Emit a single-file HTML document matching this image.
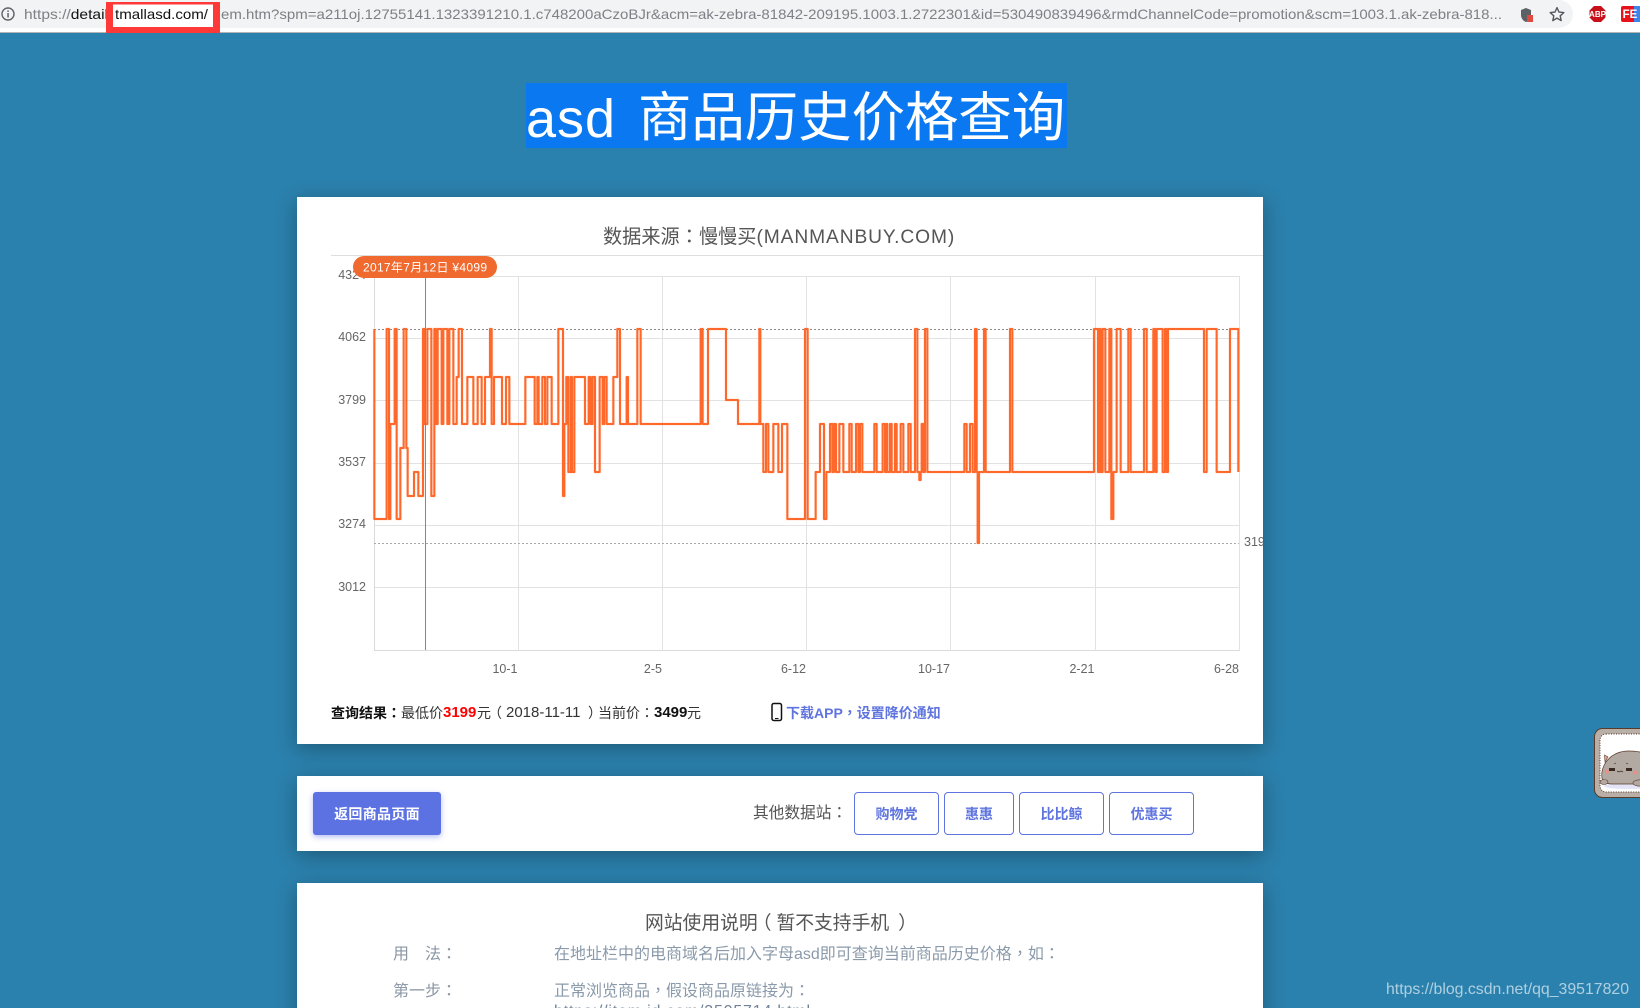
<!DOCTYPE html>
<html>
<head>
<meta charset="utf-8">
<title>asd 商品历史价格查询</title>
<style>
html,body{margin:0;padding:0;width:1640px;height:1008px;overflow:hidden;background:#2b81ad;font-family:"Liberation Sans","Noto Sans CJK SC",sans-serif;}
#root{position:relative;width:1640px;height:1008px;overflow:hidden;}
.t{position:absolute;white-space:nowrap;}
.c{font-family:"Noto Sans CJK TC",sans-serif;}
.card{position:absolute;left:297px;width:966px;background:#fff;box-shadow:0 5px 20px rgba(0,0,0,.3);overflow:hidden;}
.btn{position:absolute;top:792px;height:41px;border:1px solid #5f74df;border-radius:4px;color:#5f74df;font-weight:bold;font-size:14px;line-height:43px;text-align:center;background:#fff;}
svg{position:absolute;left:0;top:0;}
</style>
</head>
<body>
<div id="root">

<!-- browser bar -->
<div style="position:absolute;left:0;top:0;width:1640px;height:32px;background:#fff;border-bottom:1px solid #b5b5b5;"></div>
<div style="position:absolute;left:0;top:0;width:1573px;height:28px;background:#f1f3f4;border-radius:0 14px 14px 0;"></div>

<!-- heading -->
<div style="position:absolute;left:526px;top:83px;width:541px;height:65px;background:#0a78f0;overflow:hidden;">
  <div class="t" style="left:0;top:4px;color:#fff;font-size:54px;letter-spacing:1px;line-height:64px;">asd</div>
  <div class="t" style="left:112px;top:4px;color:#fff;font-size:53.4px;line-height:64px;">商品历史价格查询</div>
</div>

<!-- cards -->
<div class="card" style="top:197px;height:547px;"></div>
<div class="card" style="top:776px;height:75px;"></div>
<div class="card" style="top:883px;height:140px;"></div>

<!-- chart title -->
<div class="t" style="left:603px;top:222px;font-size:19.2px;line-height:26px;color:#555;">数据来源<span class="c">：</span>慢慢买<span style="letter-spacing:.9px">(MANMANBUY.COM)</span></div>

<svg width="1640" height="1008" viewBox="0 0 1640 1008" xmlns="http://www.w3.org/2000/svg" font-family="Liberation Sans, Noto Sans CJK SC, sans-serif">
  <!-- address text -->
  <text x="24" y="19" font-size="14" fill="#7d8186" textLength="84" lengthAdjust="spacingAndGlyphs">https://<tspan fill="#111">detail</tspan></text>
  <text x="221" y="19" font-size="14" fill="#7d8186" textLength="1281" lengthAdjust="spacingAndGlyphs">em.htm?spm=a211oj.12755141.1323391210.1.c748200aCzoBJr&amp;acm=ak-zebra-81842-209195.1003.1.2722301&amp;id=530490839496&amp;rmdChannelCode=promotion&amp;scm=1003.1.ak-zebra-818...</text>
  <!-- red annotation box -->
  <rect x="106" y="2" width="114" height="31" fill="#ff3838"/>
  <rect x="113" y="4.500" width="100" height="22.500" fill="#fff"/>
  <text x="115" y="19" font-size="14" fill="#111" textLength="93" lengthAdjust="spacingAndGlyphs">tmallasd.com/</text>

  <!-- info icon -->
  <circle cx="8" cy="14" r="6" fill="none" stroke="#5f6368" stroke-width="1.400"/>
  <rect x="7.300" y="13" width="1.500" height="4.500" fill="#5f6368"/>
  <rect x="7.300" y="10.400" width="1.500" height="1.500" fill="#5f6368"/>
  <!-- shield -->
  <path d="M1526 8l5 2v5c0 3-2 6-5 7-3-1-5-4-5-7v-5z" fill="#5d6166"/>
  <rect x="1527" y="15" width="6" height="7" fill="#e04a3f"/>
  <!-- star -->
  <path d="M1557 7.600l2 4.500 4.800.5-3.600 3.200 1 4.800-4.200-2.500-4.200 2.500 1-4.800-3.600-3.200 4.800-.5z" fill="none" stroke="#55595e" stroke-width="1.400" stroke-linejoin="round"/>
  <!-- ABP -->
  <path d="M1594 6h7l4.500 4.500v7L1601 22h-7l-4.500-4.500v-7z" fill="#c8101a"/>
  <text x="1597.500" y="17" font-size="8" font-weight="bold" fill="#fff" text-anchor="middle">ABP</text>
  <!-- FE -->
  <rect x="1621" y="6" width="19" height="16" rx="2" fill="#e8121d"/>
  <rect x="1634" y="6" width="6" height="16" fill="#3f84ec"/>
  <text x="1630" y="18" font-size="11.500" font-weight="bold" fill="#fff" text-anchor="middle">FE</text>

  <!-- title rule -->
  <line x1="331" x2="1263" y1="255.500" y2="255.500" stroke="#dedede"/>

  <!-- grid -->
  <g stroke="#e2e2e2" stroke-width="1">
    <line x1="374" x2="1240" y1="276.500" y2="276.500"/>
    <line x1="374" x2="1240" y1="338.500" y2="338.500"/>
    <line x1="374" x2="1240" y1="400.500" y2="400.500"/>
    <line x1="374" x2="1240" y1="463.500" y2="463.500"/>
    <line x1="374" x2="1240" y1="525.500" y2="525.500"/>
    <line x1="374" x2="1240" y1="587.500" y2="587.500"/>
    <line x1="374" x2="1240" y1="650.500" y2="650.500" stroke="#dadada"/>
    <line x1="374.500" x2="374.500" y1="276" y2="651" stroke="#dadada"/>
    <line x1="518.500" x2="518.500" y1="276" y2="651"/>
    <line x1="662.500" x2="662.500" y1="276" y2="651"/>
    <line x1="806.500" x2="806.500" y1="276" y2="651"/>
    <line x1="950.500" x2="950.500" y1="276" y2="651"/>
    <line x1="1095.500" x2="1095.500" y1="276" y2="651"/>
    <line x1="1239.500" x2="1239.500" y1="276" y2="651"/>
  </g>
  <line x1="374" x2="1239" y1="329.500" y2="329.500" stroke="#8a8a8a" stroke-dasharray="2 2"/>
  <line x1="374" x2="1239" y1="543.500" y2="543.500" stroke="#aaa" stroke-dasharray="2 2"/>

  <!-- axis labels -->
  <g font-size="12.500" fill="#666" text-anchor="end">
    <text x="366" y="279">4324</text>
    <text x="366" y="341">4062</text>
    <text x="366" y="404">3799</text>
    <text x="366" y="466">3537</text>
    <text x="366" y="528">3274</text>
    <text x="366" y="591">3012</text>
    <text x="517.500" y="673">10-1</text>
    <text x="662" y="673">2-5</text>
    <text x="806" y="673">6-12</text>
    <text x="950" y="673">10-17</text>
    <text x="1094.500" y="673">2-21</text>
    <text x="1239" y="673">6-28</text>
  </g>
  <svg x="1240" y="530" width="23" height="24"><text x="4" y="16" font-size="12.500" fill="#666">3199</text></svg>

  <!-- series -->
  <g transform="translate(290 0) scale(.33333 1)" fill="none" stroke="#ff682b" stroke-linejoin="round">
    <path vector-effect="non-scaling-stroke" stroke-width="3" stroke-opacity=".2" d="M253 329V519H290V329H297V519H301V424H314V329H320V519H331V448H341V329H349V448H353V496H372V472H385V496H399V329H404V424H412V329H424V496H433V329H438V424H443V329H455V424H460V329H472V424H478V329H490V424H500V377H506V329H516V424H532V377H550V424H563V377H575V424H585V377H600V329H605V424H612V377H636V424H648V377H658V424H706V377H734V424H742V377H746V424H757V377H765V424H772V377H785V424H805V329H819V496H823V424H829V377H835V472H842V377H846V472H853V377H885V424H896V377H902V424H908V377H915V472H929V377H938V424H943V377H950V424H970V377H982V329H990V424H1010V377H1014V424H1042V329H1052V424H1232V329H1238V424H1254V329H1308V400H1344V424H1408V329H1411V424H1420V472H1428V424H1435V472H1450V424H1465V472H1476V424H1492V519H1545V329H1553V519H1577V472H1590V424H1602V519H1609V472H1620V424H1627V472H1632V424H1638V472H1648V424H1660V472H1678V424H1685V472H1698V424H1705V472H1710V424H1717V472H1753V424H1760V472H1778V424H1785V472H1788V424H1792V472H1800V424H1805V472H1815V424H1820V472H1832V424H1840V472H1855V424H1862V472H1875V329H1882V472H1888V480H1892V472H1895V424H1900V472H1905V329H1912V472H2023V424H2030V472H2040V424H2048V472H2055V329H2060V472H2063V543H2067V472H2082V329H2087V472H2160V329H2167V472H2412V329H2424V472H2428V329H2432V472H2438V329H2446V472H2458V329H2464V519H2470V472H2480V329H2492V472H2515V329H2522V472H2562V329H2570V472H2590V329H2596V472H2600V329H2618V472H2625V329H2630V472H2634V329H2640H2742V472H2750V329H2780V472H2820V329H2845V472"/>
    <path vector-effect="non-scaling-stroke" stroke-width="2" d="M253 329V519H290V329H297V519H301V424H314V329H320V519H331V448H341V329H349V448H353V496H372V472H385V496H399V329H404V424H412V329H424V496H433V329H438V424H443V329H455V424H460V329H472V424H478V329H490V424H500V377H506V329H516V424H532V377H550V424H563V377H575V424H585V377H600V329H605V424H612V377H636V424H648V377H658V424H706V377H734V424H742V377H746V424H757V377H765V424H772V377H785V424H805V329H819V496H823V424H829V377H835V472H842V377H846V472H853V377H885V424H896V377H902V424H908V377H915V472H929V377H938V424H943V377H950V424H970V377H982V329H990V424H1010V377H1014V424H1042V329H1052V424H1232V329H1238V424H1254V329H1308V400H1344V424H1408V329H1411V424H1420V472H1428V424H1435V472H1450V424H1465V472H1476V424H1492V519H1545V329H1553V519H1577V472H1590V424H1602V519H1609V472H1620V424H1627V472H1632V424H1638V472H1648V424H1660V472H1678V424H1685V472H1698V424H1705V472H1710V424H1717V472H1753V424H1760V472H1778V424H1785V472H1788V424H1792V472H1800V424H1805V472H1815V424H1820V472H1832V424H1840V472H1855V424H1862V472H1875V329H1882V472H1888V480H1892V472H1895V424H1900V472H1905V329H1912V472H2023V424H2030V472H2040V424H2048V472H2055V329H2060V472H2063V543H2067V472H2082V329H2087V472H2160V329H2167V472H2412V329H2424V472H2428V329H2432V472H2438V329H2446V472H2458V329H2464V519H2470V472H2480V329H2492V472H2515V329H2522V472H2562V329H2570V472H2590V329H2596V472H2600V329H2618V472H2625V329H2630V472H2634V329H2640H2742V472H2750V329H2780V472H2820V329H2845V472"/>
  </g>

  <!-- cursor + tooltip -->
  <line x1="425.500" x2="425.500" y1="276" y2="650" stroke="#e0693a"/>
  <rect x="353" y="256" width="144" height="22" rx="11" fill="#f0692f"/>
  <text x="363" y="271.500" font-size="12" fill="#fff" textLength="124" lengthAdjust="spacing">2017年7月12日 ¥4099</text>

  <!-- phone -->
  <rect x="772" y="703.500" width="9.500" height="17" rx="1.800" fill="none" stroke="#111" stroke-width="1.500"/>
  <line x1="775" x2="778.500" y1="718.500" y2="718.500" stroke="#111"/>

  <!-- cat widget -->
  <rect x="1594.500" y="728.500" width="60" height="69" rx="8" fill="#baafa6" stroke="#5a3a28"/>
  <rect x="1600" y="734" width="50" height="58" rx="6" fill="#fff" stroke="#4a3025" stroke-dasharray="1 1.500"/>
  <ellipse cx="1628" cy="786" rx="24" ry="3" fill="#e3e4f7"/>
  <path d="M1608 757l-3.500-2 .5 7z" fill="#eda08e" stroke="#5a3a28" stroke-width=".6"/>
  <path d="M1602 778c-2-12 8-27 27-27 10 0 14 2 14 2v31h-31c-6 0-9-2-10-6z" fill="#b3a9a3" stroke="#5a3a28" stroke-width=".7"/>
  <rect x="1609" y="768" width="6" height="3" fill="#3a2a22"/>
  <rect x="1626" y="768" width="6" height="3" fill="#3a2a22"/>
  <path d="M1617 771l2 1 2-1 2 1" fill="none" stroke="#3a2a22" stroke-width=".7"/>
  <path d="M1614 764l2-1M1626 763l2 1" stroke="#3a2a22" stroke-width=".6"/>
  <circle cx="1607" cy="771.500" r="1.800" fill="#f58a80"/>
  <circle cx="1635" cy="772.500" r="1.800" fill="#f58a80"/>
  <ellipse cx="1604" cy="782" rx="4" ry="2.500" fill="#b3a9a3" stroke="#5a3a28" stroke-width=".6"/>
  <ellipse cx="1640" cy="783" rx="7" ry="3.200" fill="#b3a9a3" stroke="#5a3a28" stroke-width=".6"/>

  <!-- watermark -->
  <text x="1386" y="994" font-size="16" fill="#fff" fill-opacity=".62" textLength="243" lengthAdjust="spacingAndGlyphs">https://blog.csdn.net/qq_39517820</text>
</svg>

<!-- result line -->
<div class="t" style="left:331px;top:703px;line-height:20px;font-size:14px;color:#111;font-weight:bold;">查询结果<span class="c">：</span></div>
<div class="t" style="left:401px;top:703px;line-height:20px;font-size:14px;color:#333;">最低价</div>
<div class="t" style="left:443px;top:703px;line-height:20px;font-size:15px;color:#f00;font-weight:bold;">3199</div>
<div class="t" style="left:477px;top:703px;line-height:20px;font-size:14px;color:#333;">元</div>
<div class="t c" style="left:488px;top:703px;line-height:20px;font-size:14px;color:#333;">（</div>
<div class="t" style="left:506px;top:703px;line-height:20px;font-size:15px;color:#333;">2018-11-11</div>
<div class="t c" style="left:588px;top:703px;line-height:20px;font-size:14px;color:#333;">）</div>
<div class="t" style="left:598px;top:703px;line-height:20px;font-size:14px;color:#333;">当前价<span class="c">：</span></div>
<div class="t" style="left:654px;top:703px;line-height:20px;font-size:15px;color:#111;font-weight:bold;">3499</div>
<div class="t" style="left:687px;top:703px;line-height:20px;font-size:14px;color:#333;">元</div>
<div class="t" style="left:786px;top:703px;line-height:20px;font-size:14px;color:#5f74df;font-weight:bold;">下载APP<span class="c">，</span>设置降价通知</div>

<!-- second card -->
<div class="t" style="left:313px;top:792px;width:128px;height:43px;background:#5d72e2;border-radius:3px;box-shadow:0 2px 6px rgba(93,114,226,.45);color:#fff;font-weight:bold;font-size:14px;letter-spacing:.3px;line-height:45px;text-align:center;">返回商品页面</div>
<div class="t" style="left:753px;top:801px;line-height:22px;font-size:15.700px;color:#555;">其他数据站<span class="c">：</span></div>
<div class="btn" style="left:854px;width:83px;">购物党</div>
<div class="btn" style="left:944px;width:68px;">惠惠</div>
<div class="btn" style="left:1019px;width:83px;">比比鲸</div>
<div class="btn" style="left:1109px;width:83px;">优惠买</div>

<!-- third card -->
<div class="t" style="left:645px;top:908px;line-height:28px;font-size:18.800px;color:#555;">网站使用说明<span class="c" style="position:relative;left:-5px">（</span>暂不支持手机<span class="c" style="position:relative;left:9px">）</span></div>
<div class="t" style="left:393px;top:941px;line-height:22px;font-size:16px;color:#8a96a4;">用<span style="margin-left:16px">法</span><span class="c">：</span></div>
<div class="t" style="left:554px;top:941px;line-height:22px;font-size:16px;color:#8a9aaa;">在地址栏中的电商域名后加入字母asd即可查询当前商品历史价格<span class="c">，</span>如<span class="c">：</span></div>
<div class="t" style="left:393px;top:978px;line-height:22px;font-size:16px;color:#8a96a4;">第一步<span class="c">：</span></div>
<div class="t" style="left:554px;top:978px;line-height:22px;font-size:16px;color:#8a9aaa;">正常浏览商品<span class="c">，</span>假设商品原链接为<span class="c">：</span></div>
<div class="t" style="left:554px;top:1001px;line-height:22px;font-size:16px;letter-spacing:.8px;color:#6f8296;">https://item.jd.com/3505714.html</div>

</div>
</body>
</html>
